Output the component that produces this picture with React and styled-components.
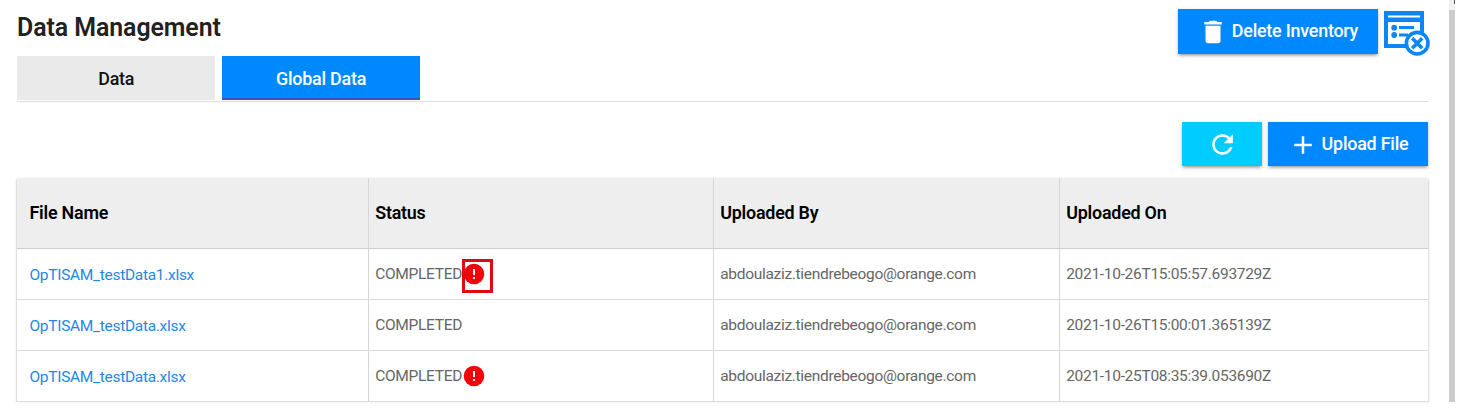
import React from 'react';
import styled, { createGlobalStyle } from 'styled-components';

const GlobalStyle = createGlobalStyle`
  * { box-sizing: border-box; }
  body {
    margin: 0;
    background: #fff;
    font-family: Roboto, sans-serif;
    overflow: hidden;
  }
`;

const Page = styled.div`
  display: flex;
  width: 1464px;
  height: 412px;
`;

const Main = styled.main`
  width: 1449px;
  padding: 9px 21px 0 17px;
`;

const Scrollbar = styled.div`
  display: flex;
  flex-direction: column;
  width: 6px;
  height: 402px;
  padding-top: 10px;
  background: #f1f1f1;
`;

const Thumb = styled.div`
  flex: 1;
  background: #cbcbcb;
`;

const CornerMark = styled.div`
  width: 1px;
  height: 4px;
  margin-left: -1px;
  background: #555;
`;

const Header = styled.header`
  display: flex;
  justify-content: space-between;
  align-items: flex-start;
  height: 47px;
  margin-right: -2px;
`;

const Title = styled.h1`
  margin: 4px 0 0;
  font-size: 24.9px;
  font-weight: 600;
  letter-spacing: -0.06px;
  line-height: 29px;
  color: #212121;
  white-space: nowrap;
`;

const HeaderActions = styled.div`
  display: flex;
  align-items: flex-start;
  gap: 6px;
`;

const Button = styled.button`
  display: flex;
  align-items: center;
  justify-content: center;
  width: ${(p) => p.$width}px;
  height: 44.5px;
  padding: 0 0 1px;
  gap: ${(p) => p.$gap || 0}px;
  border: 0;
  background: ${(p) => p.$color || '#0089ff'};
  box-shadow: 0 3px 2px -2px rgba(0, 0, 0, 0.22), 0 2px 3px rgba(0, 0, 0, 0.16), 0 1px 5px rgba(0, 0, 0, 0.1);
  color: #fff;
  font: 500 17.9px Roboto, sans-serif;
  letter-spacing: -0.22px;
  white-space: nowrap;
`;

const Icon = styled.svg`
  display: block;
  flex: none;
  fill: currentColor;
  margin-top: ${(p) => p.$drop || 0}px;
`;

const ClearListIcon = styled.svg`
  display: block;
  margin-top: 2px;
`;

const Tabs = styled.nav`
  display: flex;
  gap: 6.5px;
  height: 45.5px;
  border-bottom: 1px solid #dedede;
`;

const Tab = styled.div`
  width: 198.4px;
  height: 44.4px;
  display: flex;
  align-items: center;
  justify-content: center;
  background: ${(p) => (p.$active ? '#0089ff' : '#eaeaea')};
  box-shadow: ${(p) => (p.$active ? 'inset 0 -2px #3f51b5' : 'none')};
  color: ${(p) => (p.$active ? '#fff' : '#111')};
  font-size: 17.9px;
  font-weight: 500;
  letter-spacing: -0.22px;
`;

const Toolbar = styled.div`
  display: flex;
  justify-content: flex-end;
  gap: 6px;
  height: 57px;
  padding-top: 20px;
  margin-bottom: 19.5px;
`;

const Grid = styled.div`
  width: 1413px;
  height: 224px;
  margin-left: -1px;
  border: 1px solid #dedede;
  border-top: 0;
  border-radius: 4px 4px 0 0;
  box-shadow: 0 0 2px rgba(0, 0, 0, 0.12);
`;

const Row = styled.div`
  display: grid;
  grid-template-columns: 352px 345px 346px 1fr;
  height: 51px;
  border-bottom: 1px solid #dcdcdc;
  &:last-child { border-bottom: 0; }
`;

const HeadRow = styled(Row)`
  height: 71px;
  border-bottom-color: #cfcfcf;
  border-radius: 4px 4px 0 0;
  background: #eee;
`;

const Cell = styled.div`
  display: flex;
  align-items: center;
  padding: 0 0 1px 6.2px;
  border-right: 1px solid #d6d6d6;
  color: #666;
  font-size: 15.5px;
  letter-spacing: -0.3px;
  white-space: nowrap;
  &:first-child { padding-left: 12.5px; }
  &:last-child { border-right: 0; }
`;

const HeadCell = styled(Cell)`
  color: #000;
  font-size: 17.9px;
  font-weight: 600;
  letter-spacing: -0.22px;
`;

const FileLink = styled.a`
  padding-top: 2px;
  color: #1e88e5;
`;

const ErrorBadge = styled.span`
  position: relative;
  display: block;
`;

const Highlight = styled.span`
  position: absolute;
  left: 0;
  top: -3px;
  width: 31px;
  height: 34px;
  border: 3px solid #df0b10;
`;

const files = [
  { name: 'OpTISAM_testData1.xlsx', error: true, highlighted: true, date: '2021-10-26T15:05:57.693729Z' },
  { name: 'OpTISAM_testData.xlsx', date: '2021-10-26T15:00:01.365139Z' },
  { name: 'OpTISAM_testData.xlsx', error: true, date: '2021-10-25T08:35:39.053690Z' },
];

function ErrorIcon({ highlighted }) {
  return (
    <ErrorBadge>
      <Icon width="24" height="24" viewBox="0 0 24 24">
        <circle cx="12" cy="12" r="10.3" fill="#f4000b" />
        <path d="M11 7h2v6h-2zm0 8h2v2h-2z" fill="#fff" />
      </Icon>
      {highlighted && <Highlight />}
    </ErrorBadge>
  );
}

export default function App() {
  return (
    <Page>
      <GlobalStyle />
      <Main>
        <Header>
          <Title>Data Management</Title>
          <HeaderActions>
            <Button $width={200} $gap={4}>
              <Icon width="30" height="30" viewBox="0 0 24 24" $drop={2}>
                <path d="M6 19c0 1.1.9 2 2 2h8c1.1 0 2-.9 2-2V7H6v12zM19 4h-3.500l-1-1h-5l-1 1H5v2h14V4z" />
              </Icon>
              Delete Inventory
            </Button>
            <ClearListIcon width="46" height="46" viewBox="0 0 46 46">
              <path d="M0 0h40v37H0z" fill="#0a86f5" />
              <path d="M4 4.500h32v2H4zM4 11h32v22H4z" fill="#fff" />
              <circle cx="10.200" cy="16.700" r="2.900" fill="#0a86f5" />
              <circle cx="10.200" cy="24" r="2.900" fill="#0a86f5" />
              <path d="M15 15h15v3H15zM15 22.500h9v3h-9z" fill="#0a86f5" />
              <circle cx="33.200" cy="32.200" r="10.800" fill="#fff" stroke="#0a86f5" strokeWidth="3.600" />
              <path d="m28.200 27.200 10 10m0-10-10 10" stroke="#0a86f5" strokeWidth="3.600" />
            </ClearListIcon>
          </HeaderActions>
        </Header>
        <Tabs>
          <Tab>Data</Tab>
          <Tab $active>Global Data</Tab>
        </Tabs>
        <Toolbar>
          <Button $width={80} $color="#00ccff" aria-label="Refresh">
            <Icon width="31" height="31" viewBox="0 0 24 24" $drop={3}>
              <path d="M17.650 6.350C16.200 4.900 14.210 4 12 4c-4.420 0-7.990 3.580-7.990 8s3.570 8 7.990 8c3.730 0 6.840-2.550 7.730-6h-2.080c-.82 2.330-3.040 4-5.650 4-3.310 0-6-2.690-6-6s2.690-6 6-6c1.660 0 3.140.69 4.220 1.780L13 11h7V4l-2.350 2.350z" />
            </Icon>
          </Button>
          <Button $width={160} $gap={4}>
            <Icon width="30" height="30" viewBox="0 0 24 24" $drop={3}>
              <path d="M19 13h-6v6h-2v-6H5v-2h6V5h2v6h6v2z" />
            </Icon>
            Upload File
          </Button>
        </Toolbar>
        <Grid>
          <HeadRow>
            <HeadCell>File Name</HeadCell>
            <HeadCell>Status</HeadCell>
            <HeadCell>Uploaded By</HeadCell>
            <HeadCell>Uploaded On</HeadCell>
          </HeadRow>
          {files.map((file) => (
            <Row key={file.date}>
              <Cell><FileLink>{file.name}</FileLink></Cell>
              <Cell>
                COMPLETED
                {file.error && <ErrorIcon highlighted={file.highlighted} />}
              </Cell>
              <Cell>abdoulaziz.tiendrebeogo@orange.com</Cell>
              <Cell>{file.date}</Cell>
            </Row>
          ))}
        </Grid>
      </Main>
      <Scrollbar><Thumb /></Scrollbar>
      <CornerMark />
    </Page>
  );
}
